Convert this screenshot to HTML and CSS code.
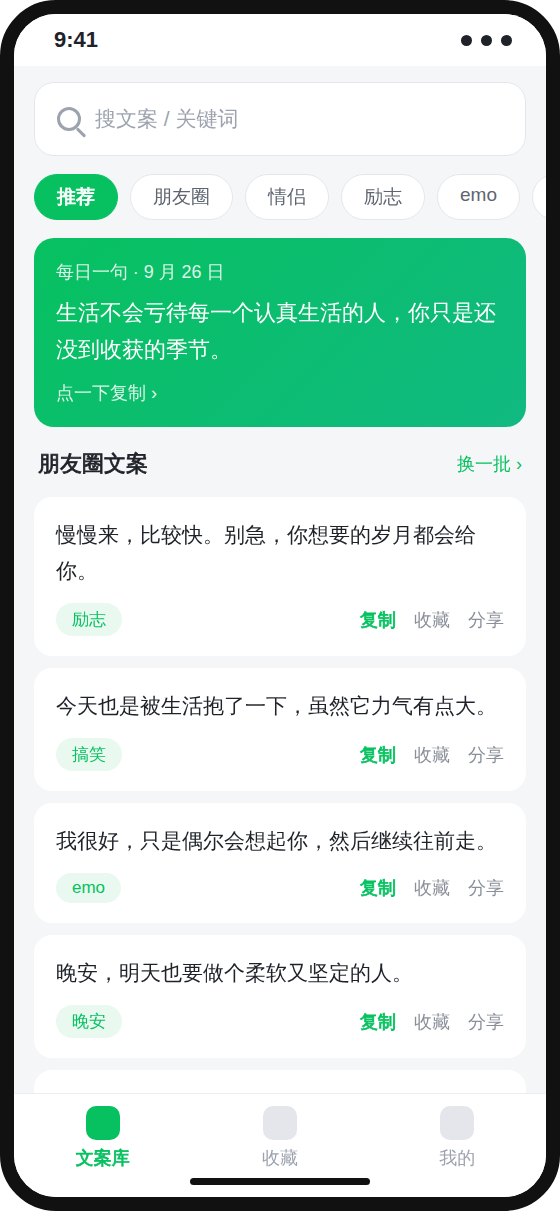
FILE: index.html
```html
<!DOCTYPE html>
<html lang="zh-CN">
<head>
<meta charset="utf-8">
<title>文案库</title>
<link rel="stylesheet" href="styles.css">
</head>
<body>
<div class="phone">
  <header class="status"><span>9:41</span><div class="dots"><i></i><i></i><i></i></div></header>
  <main class="content">
    <div class="search"><span class="search-icon"></span><span>搜文案 / 关键词</span></div>
    <nav class="chips">
      <span class="chip active">推荐</span><span class="chip">朋友圈</span><span class="chip">情侣</span><span class="chip">励志</span><span class="chip latin">emo</span><span class="chip more"></span>
    </nav>
    <section class="daily">
      <div class="daily-date">每日一句 · 9 月 26 日</div>
      <div class="daily-text">生活不会亏待每一个认真生活的人，你只是还没到收获的季节。</div>
      <div class="daily-hint">点一下复制 ›</div>
    </section>
    <div class="heading"><h2>朋友圈文案</h2><span>换一批 ›</span></div>
    <article class="card"><p>慢慢来，比较快。别急，你想要的岁月都会给你。</p><div class="row"><span class="tag">励志</span><div class="actions"><b>复制</b><span>收藏</span><span>分享</span></div></div></article>
    <article class="card"><p>今天也是被生活抱了一下，虽然它力气有点大。</p><div class="row"><span class="tag">搞笑</span><div class="actions"><b>复制</b><span>收藏</span><span>分享</span></div></div></article>
    <article class="card"><p>我很好，只是偶尔会想起你，然后继续往前走。</p><div class="row"><span class="tag latin">emo</span><div class="actions"><b>复制</b><span>收藏</span><span>分享</span></div></div></article>
    <article class="card"><p>晚安，明天也要做个柔软又坚定的人。</p><div class="row"><span class="tag">晚安</span><div class="actions"><b>复制</b><span>收藏</span><span>分享</span></div></div></article>
    <article class="card last"></article>
  </main>
  <footer class="tabbar">
    <div class="tab on"><i></i><span>文案库</span></div>
    <div class="tab"><i></i><span>收藏</span></div>
    <div class="tab"><i></i><span>我的</span></div>
    <div class="home"></div>
  </footer>
</div>
</body>
</html>
```
FILE: styles.css
```css
* { box-sizing: border-box; }
body { margin: 0; background: #fff; color: #1f2329; font-family: "Liberation Sans", "WenQuanYi Zen Hei", "Noto Sans CJK SC", sans-serif; }
.phone { width: 560px; height: 1211px; border: 14px solid #111; border-radius: 56px; background: #f5f6f8; overflow: hidden; display: flex; flex-direction: column; }
.status { flex: none; height: 52px; padding: 0 34px 0 40px; background: #fff; display: flex; align-items: center; justify-content: space-between; font-size: 22px; font-weight: 700; }
.dots { display: flex; gap: 9px; }
.dots i { width: 11px; height: 11px; border-radius: 50%; background: #1f2329; }
.content { flex: 1; min-height: 0; overflow: hidden; padding: 16px 20px 0; }
.search { height: 74px; border: 1px solid #e5e6eb; border-radius: 20px; background: #fff; display: flex; align-items: center; gap: 14px; padding: 0 22px; font-size: 21px; color: #9ca3af; }
.search-icon { position: relative; width: 24px; height: 24px; border: 3px solid #9ca3af; border-radius: 50%; }
.search-icon::after { content: ""; position: absolute; width: 12px; height: 3px; right: -9px; bottom: -6px; background: #9ca3af; transform: rotate(45deg); border-radius: 2px; }
.chips { display: flex; gap: 12px; margin: 18px -20px 18px 0; overflow: hidden; }
.chip { flex: none; height: 46px; border: 1px solid #e5e6eb; border-radius: 23px; background: #fff; padding: 8px 22px; font-size: 19px; line-height: 28px; color: #5f6570; }
.chip.latin { line-height: 24px; }
.chip.more { width: 84px; }
.chip.active { border-color: #07c160; background: #07c160; color: #fff; }
/* The CJK face has no bold cut, so emphasis is thickened with a stroke. */
.chip.active, .heading h2, .actions b, .on { font-weight: 700; -webkit-text-stroke: .8px currentColor; }
.daily { height: 189px; border-radius: 20px; padding: 21px 22px; background: linear-gradient(135deg, #07c160, #10b981); color: #fff; }
.daily-date, .daily-hint { font-size: 18px; line-height: 26px; opacity: .85; }
.daily-date { letter-spacing: -.04px; }
.daily-text { font-size: 22px; line-height: 37px; margin: 9px 0 12px; }
.heading { display: flex; justify-content: space-between; align-items: center; height: 32px; margin: 21px 4px 17px; }
.heading h2 { margin: 0; font-size: 22px; line-height: 32px; }
.heading span { font-size: 18px; color: #07c160; }
.card { background: #fff; border-radius: 18px; padding: 20px 22px; margin-bottom: 12px; }
.card p { margin: 0 0 14px; font-size: 21px; line-height: 36px; }
.row { display: flex; justify-content: space-between; align-items: center; }
.tag { height: 33px; background: #e9f9f0; color: #07c160; font-size: 17px; line-height: 23px; padding: 5px 16px; border-radius: 20px; }
.tag.latin { height: 30px; line-height: 20px; }
.actions { display: flex; gap: 18px; font-size: 18px; color: #8a8f99; }
.actions b { color: #07c160; }
.last { height: 120px; }
.tabbar { flex: none; position: relative; height: 104px; border-top: 1px solid #ebedf0; background: #fff; display: flex; padding-top: 12px; }
.tab { flex: 1; display: flex; flex-direction: column; align-items: center; gap: 5px; font-size: 18px; line-height: 26px; color: #9ca3af; }
.tab i { width: 34px; height: 34px; border-radius: 10px; background: #e5e6eb; }
.tab.on { color: #07c160; }
.on i { background: #07c160; }
.home { position: absolute; bottom: 12px; left: 176px; width: 180px; height: 7px; border-radius: 4px; background: #111; }
```
